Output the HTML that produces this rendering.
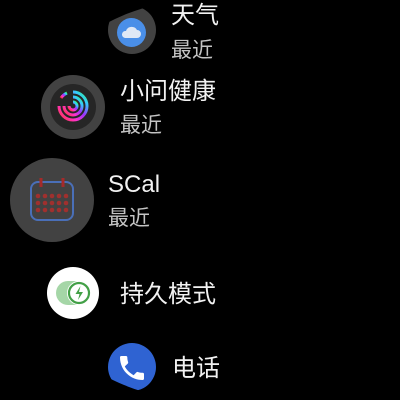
<!DOCTYPE html>
<html><head><meta charset="utf-8"><style>
html,body{margin:0;background:#000;width:400px;height:400px;overflow:hidden}
#s{position:absolute;left:0;top:0;width:400px;height:400px;clip-path:circle(200px at 200px 200px);font-family:"Liberation Sans","Noto Sans CJK SC",sans-serif}
.c{position:absolute;border-radius:50%}
.t{position:absolute;color:#f2f2f2;font-size:24px;line-height:28px;white-space:nowrap}
.g{position:absolute;color:#c4c4c4;font-size:21px;line-height:24px;white-space:nowrap}
</style></head><body><div id="s">
<div class="c" style="left:108px;top:6px;width:48px;height:48px;background:#424242"></div>
<div class="c" style="left:117px;top:18px;width:29px;height:29px;background:#4a8fe8"></div>
<svg style="position:absolute;left:121px;top:24px" width="21" height="16" viewBox="0 0 21 16"><path d="M4 14h12a4 4 0 0 0 0-8a6 6 0 0 0-11 1a3.5 3.5 0 0 0-1 7z" fill="#dfe8f5"/></svg>
<div class="t" style="left:171px;top:2px">天气</div>
<div class="g" style="left:171px;top:39px">最近</div>

<div class="c" style="left:41px;top:75px;width:64px;height:64px;background:#424242"></div>
<div class="c" style="left:50px;top:84px;width:46px;height:46px;background:#262626"></div>
<svg style="position:absolute;left:56px;top:89px" width="34" height="34" viewBox="0 0 34 34"><defs><linearGradient id="h" x1="0" y1="1" x2="1" y2="0"><stop offset="0" stop-color="#f33"/><stop offset=".3" stop-color="#f3c"/><stop offset=".55" stop-color="#93f"/><stop offset=".8" stop-color="#3cf"/><stop offset="1" stop-color="#3f6"/></linearGradient></defs><g fill="none" stroke="url(#h)" stroke-width="3"><path d="M17 3a14 14 0 1 1-14 14"/><path d="M17 8a9 9 0 1 1-9 9"/><path d="M17 13a4 4 0 1 1-4 4"/><path d="M5 9a14 14 0 0 1 6-5"/></g></svg>
<div class="t" style="left:120px;top:78px">小问健康</div>
<div class="g" style="left:120px;top:114px">最近</div>

<div class="c" style="left:10px;top:158px;width:84px;height:84px;background:#424242"></div>
<svg style="position:absolute;left:28px;top:175px" width="48" height="48" viewBox="0 0 48 48"><rect x="3" y="7" width="42" height="38" rx="7" fill="none" stroke="#4a6fb8" stroke-width="2"/><path d="M13 3v9M35 3v9" stroke="#a52a2a" stroke-width="3"/><g fill="#a0302e"><circle cx="10" cy="21" r="2.3"/><circle cx="17" cy="21" r="2.3"/><circle cx="24" cy="21" r="2.3"/><circle cx="31" cy="21" r="2.3"/><circle cx="38" cy="21" r="2.3"/><circle cx="10" cy="28" r="2.3"/><circle cx="17" cy="28" r="2.3"/><circle cx="24" cy="28" r="2.3"/><circle cx="31" cy="28" r="2.3"/><circle cx="38" cy="28" r="2.3"/><circle cx="10" cy="35" r="2.3"/><circle cx="17" cy="35" r="2.3"/><circle cx="24" cy="35" r="2.3"/><circle cx="31" cy="35" r="2.3"/><circle cx="38" cy="35" r="2.3"/></g></svg>
<div class="t" style="left:108px;top:171px">SCal</div>
<div class="g" style="left:108px;top:207px">最近</div>

<div class="c" style="left:47px;top:267px;width:52px;height:52px;background:#fff"></div>
<svg style="position:absolute;left:55px;top:279px" width="38" height="28" viewBox="0 0 38 28"><rect x="1" y="2" width="30" height="24" rx="12" fill="#a5d6a7"/><circle cx="24" cy="14" r="12" fill="#fff"/><circle cx="24" cy="14" r="10" fill="none" stroke="#43a047" stroke-width="2.2"/><path d="M25.5 7l-5 8h4l-1.5 6l5-8h-4z" fill="#43a047"/></svg>
<div class="t" style="left:120px;top:281px">持久模式</div>

<div class="c" style="left:108px;top:343px;width:48px;height:48px;background:#2f63d2"></div>
<svg style="position:absolute;left:116px;top:352px" width="32" height="32" viewBox="0 0 24 24"><path d="M6.6 10.8c1.4 2.8 3.8 5.1 6.6 6.6l2.2-2.2c.3-.3.7-.4 1-.2 1.1.4 2.3.6 3.6.6.6 0 1 .4 1 1V20c0 .6-.4 1-1 1C10.6 21 3 13.4 3 4c0-.6.4-1 1-1h3.5c.6 0 1 .4 1 1 0 1.3.2 2.5.6 3.6.1.3 0 .7-.2 1z" fill="#fff"/></svg>
<div class="t" style="left:172px;top:355px">电话</div>
</div></body></html>
